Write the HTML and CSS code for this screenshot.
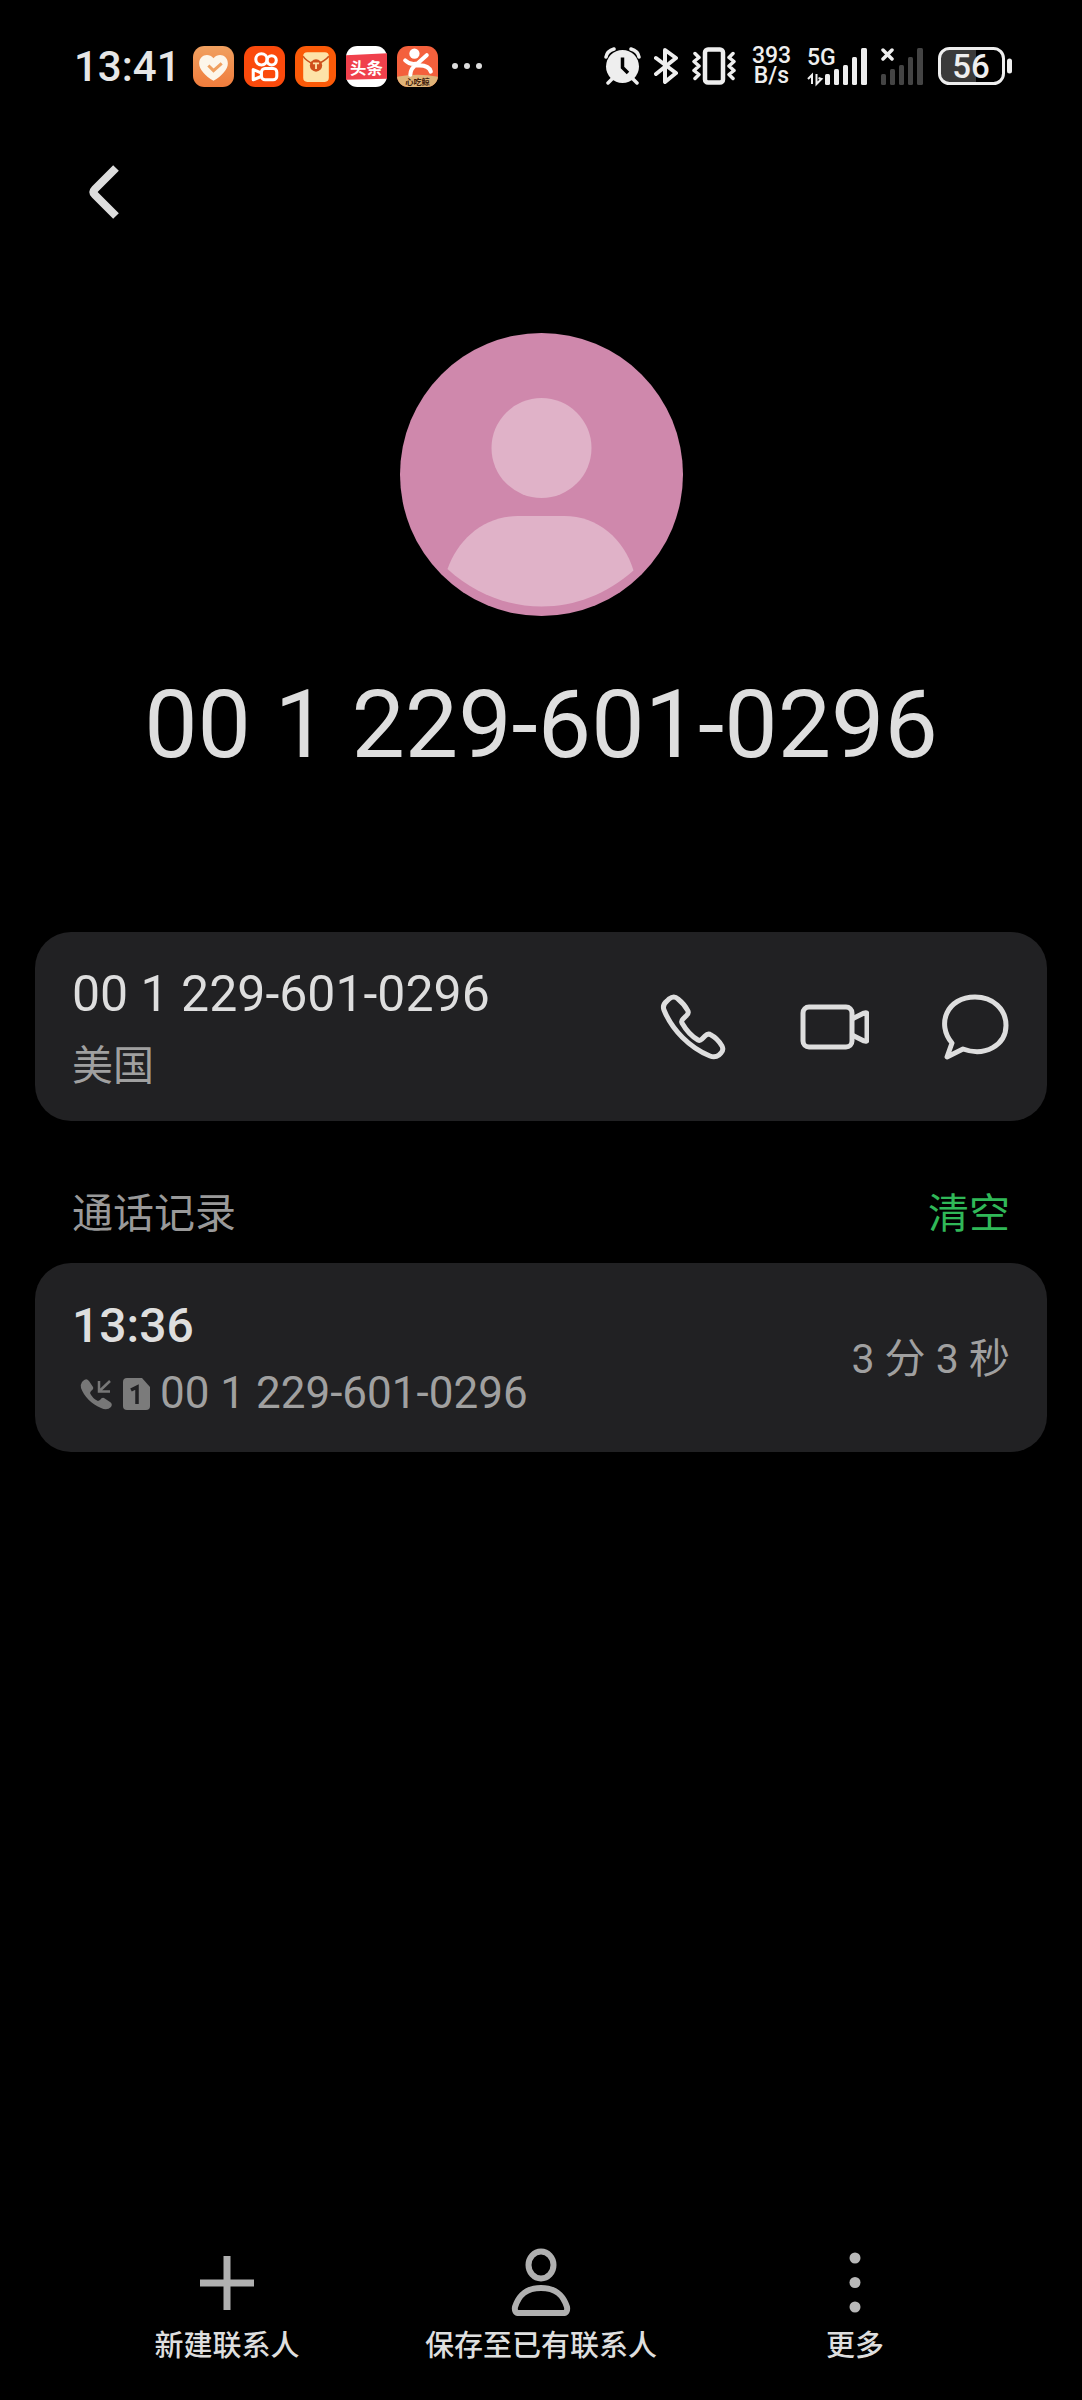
FILE: index.html
```html
<!DOCTYPE html>
<html lang="zh-CN">
<head>
<meta charset="utf-8">
<meta name="viewport" content="width=device-width, initial-scale=1">
<title>联系人详情</title>
<link rel="stylesheet" href="styles.css">
</head>
<body>
<div class="status">
  <time class="clock">13:41</time>
  <div class="apps">
    <svg class="app" viewBox="0 0 40 40" aria-hidden="true">
      <defs><linearGradient id="g1" x1="0" y1="0" x2="0" y2="1"><stop offset="0" stop-color="#f0a060"/><stop offset="1" stop-color="#f07c3c"/></linearGradient></defs>
      <rect width="40" height="40" rx="11" fill="url(#g1)"/>
      <path d="M20 34C12 29 6 23 6 17c0-8 9-11 14-5 5-6 14-3 14 5 0 6-6 12-14 17z" fill="#fdf6ea"/>
      <path d="M15 19l5 5 8-7" fill="none" stroke="#f0a060" stroke-width="3"/>
    </svg>
    <svg class="app" viewBox="0 0 40 40" aria-hidden="true">
      <rect width="40" height="40" rx="11" fill="#fb4a0c"/>
      <g fill="none" stroke="#fff" stroke-width="3" stroke-linejoin="round"><circle cx="17" cy="13" r="5.5"/><circle cx="27" cy="14" r="4.5"/><rect x="17" y="22" width="15" height="11" rx="3.5"/><path d="M16 26l-7-3v10l7-3"/></g>
    </svg>
    <svg class="app" viewBox="0 0 40 40" aria-hidden="true">
      <rect width="40" height="40" rx="11" fill="#fb5a08"/>
      <rect x="8" y="6" width="25" height="29" rx="4" fill="#fde3a8"/>
      <path d="M8 10q2 4 12 9 10-5 13-9" fill="none" stroke="#c8501c" stroke-width="1.5"/>
      <circle cx="20.500" cy="19" r="6" fill="#d0501c"/><path d="M17.500 17h6M20.500 17v5.500" stroke="#fde3a8" stroke-width="1.800"/>
    </svg>
    <svg class="app" viewBox="0 0 40 40" aria-hidden="true">
      <rect width="40" height="40" rx="11" fill="#fff"/>
      <path d="M0 9l40-2v25L0 33z" fill="#f0404c"/>
      <text class="app-name" x="20" y="27" font-size="16" font-weight="700" fill="#fff" text-anchor="middle">头条</text>
    </svg>
    <svg class="app" viewBox="0 0 40 40" aria-hidden="true">
      <defs><clipPath id="c5"><rect width="40" height="40" rx="11"/></clipPath></defs>
      <g clip-path="url(#c5)"><rect width="40" height="40" fill="#f4603c"/><path d="M0 30q20-4 40 0v10H0z" fill="#e0b478"/></g>
      <circle cx="17" cy="7.500" r="5" fill="#fff"/>
      <path d="M8 14q5 5 12 3l9-8M20 17q-7 5-7 11M19 19q12-1 14 6" fill="none" stroke="#fff" stroke-width="4" stroke-linecap="round"/>
      <text class="app-name" x="20" y="38" font-size="8" font-weight="700" fill="#40200c" text-anchor="middle">心吃鲸</text>
    </svg>
  </div>
  <svg class="more-apps" viewBox="0 0 30 8" aria-hidden="true"><g fill="#ddd"><circle cx="3" cy="4" r="3"/><circle cx="15" cy="4" r="3"/><circle cx="27" cy="4" r="3"/></g></svg>
  <div class="system">
    <svg width="37" height="40" viewBox="0 0 37 40" aria-hidden="true">
      <g fill="none" stroke="#eee" stroke-width="3.500" stroke-linecap="round"><path d="M2 11q1-6 8-8M35 11q-1-6-8-8M8 33l-4 4M29 33l4 4"/></g>
      <circle cx="18.500" cy="20.500" r="16.500" fill="#eee"/><path d="M18.500 11.500v10l5.500 5.500" fill="none" stroke="#000" stroke-width="3.500"/>
    </svg>
    <svg width="25" height="40" viewBox="0 0 25 40" aria-hidden="true"><path d="M2 12l20 15-11 9V4l11 8L2 28" fill="none" stroke="#eee" stroke-width="4" stroke-linejoin="round" stroke-linecap="round"/></svg>
    <svg width="44" height="40" viewBox="0 0 44 40" aria-hidden="true">
      <g fill="none" stroke="#eee" stroke-linejoin="round" stroke-linecap="round"><rect x="13" y="3.500" width="18" height="33" rx="3" stroke-width="4.500"/><path d="M3 7.500l4 4-5 4 5 4.500-5 4.500 5 4-4 4M41 7.500l-4 4 5 4-5 4.500 5 4.500-5 4 4 4" stroke-width="3.500"/></g>
    </svg>
    <div class="speed"><span>393</span><span>B/s</span></div>
    <svg class="signal" width="61" height="40" viewBox="0 0 61 40" aria-hidden="true">
      <text class="net" x="0" y="19" font-size="23" font-weight="500" fill="#eee">5G</text>
      <g fill="#eee"><rect x="18" y="28" width="5" height="11" rx="1.500"/><rect x="27" y="23" width="5" height="16" rx="1.500"/><rect x="36" y="19" width="5" height="20" rx="1.500"/><rect x="45" y="11" width="5" height="28" rx="1.500"/><rect x="54" y="2" width="6" height="37" rx="1.500"/></g>
      <path d="M1 33l4-4v9M9.500 28v10l5-5-3-1" fill="none" stroke="#eee" stroke-width="2"/>
    </svg>
    <svg width="44" height="40" viewBox="0 0 44 40" aria-hidden="true">
      <path d="M2 4l9 9M11 4l-9 9" stroke="#eee" stroke-width="3.500" stroke-linecap="round"/>
      <g fill="#444"><rect x="0" y="28" width="5" height="11" rx="1.500"/><rect x="9" y="23" width="5" height="16" rx="1.500"/><rect x="18" y="19" width="5" height="20" rx="1.500"/><rect x="27" y="11" width="5" height="28" rx="1.500"/><rect x="36" y="2" width="6" height="37" rx="1.500"/></g>
    </svg>
    <svg width="74" height="40" viewBox="0 0 74 40" aria-hidden="true">
      <path d="M38 3H13Q3 3 3 12v16q0 9 10 9h25z" fill="#3a3a3a"/><rect x="1.500" y="2.500" width="64" height="35" rx="10" fill="none" stroke="#eee" stroke-width="3"/>
      <path d="M71.500 15v10" stroke="#eee" stroke-width="5" stroke-linecap="round"/>
      <text class="net" x="33" y="32" font-size="33" font-weight="500" fill="#eee" text-anchor="middle">56</text>
    </svg>
  </div>
</div>

<header class="bar">
  <button class="back" aria-label="返回"><svg viewBox="0 0 60 60" aria-hidden="true"><path d="M43 6L22 27q-3 3 0 6l21 21" fill="none" stroke="#ddd" stroke-width="8"/></svg></button>
</header>

<main>
  <section class="profile">
    <svg class="avatar" viewBox="0 0 283 283" role="img" aria-label="头像">
      <circle cx="141.500" cy="141.500" r="141.500" fill="#cf88ac"/>
      <circle cx="141.500" cy="115" r="50" fill="#e0b2c8"/>
      <path d="M47.500 236C58 206 84 183 118 183h46c34 0 60 23 69.500 54.500C207 261 175 273.500 141.500 273.500S75 261 47.500 236z" fill="#e0b2c8"/>
    </svg>
    <h1 class="title">00 1 229-601-0296</h1>
  </section>

  <section class="card">
    <div class="info">
      <div class="primary">00 1 229-601-0296</div>
      <div class="region">美国</div>
    </div>
    <div class="actions">
      <button class="action" aria-label="拨打电话"><svg viewBox="0 0 70 70" aria-hidden="true"><path d="M8 10l2-2q5-4 9 0c5 4 8 8 10 12q1 3-2 5l-3 3q-2 2-1 4c4 7 9 13 16 17q2 1 4-1l3-3q3-3 6-1c4 2 8 6 11 11q2 4-1 7l-2 2q-4 3-9 1C31 57 13 39 5 19q-2-5 3-9z" transform="translate(1 -1)"/></svg></button>
      <button class="action" aria-label="视频通话"><svg viewBox="0 0 70 70" aria-hidden="true"><rect x="4" y="15" width="49" height="40" rx="6"/><path d="M53 27l12-6q3-1 3 1v26q0 2-3 1l-12-6"/></svg></button>
      <button class="action" aria-label="发送信息"><svg viewBox="0 0 70 70" aria-hidden="true"><path d="M12 51C-4 32 7 5 35 5c18 0 31 12 31 28.500C66 53 45 65 23 57L7 65z"/></svg></button>
    </div>
  </section>

  <div class="section-head">
    <h2 class="section-title">通话记录</h2>
    <button class="clear">清空</button>
  </div>

  <section class="card">
    <div class="info">
      <div class="primary time">13:36</div>
      <div class="record">
        <svg width="34" height="34" viewBox="0 0 34 34" aria-hidden="true"><path d="M3 5q4-5 7-1l4 6q1 2-2 4l-1 2q2 5 8 8l2-1q2-3 4-2l6 4q3 2 1 5-4 4-10 1C12 27 5 19 2 11q-1-3 1-6z" fill="#777"/><path d="M31 4L20.500 14M20 4v10.500h11" fill="none" stroke="#777" stroke-width="2.500"/></svg>
        <svg width="27" height="34" viewBox="0 0 27 34" aria-hidden="true"><path d="M4 1h15l8 9v19q0 4-4 4H4q-4 0-4-4V5q0-4 4-4z" fill="#7b7b7b"/><path d="M8 13l6-3v17" fill="none" stroke="#212123" stroke-width="3.500"/></svg>
        <span class="number">00 1 229-601-0296</span>
      </div>
    </div>
    <div class="duration">3 分 3 秒</div>
  </section>
</main>

<nav class="tools">
  <button class="tool"><svg viewBox="0 0 70 70" aria-hidden="true"><path d="M35 9v54M8 36h54" stroke="#b0b0b0" stroke-width="7"/></svg><span>新建联系人</span></button>
  <button class="tool"><svg viewBox="0 0 70 70" aria-hidden="true"><g fill="none" stroke="#b0b0b0" stroke-width="6"><ellipse cx="35" cy="18" rx="12.500" ry="13.500"/><path d="M35 41c15 0 22 7 26 19q1 6-4 6H13q-5 0-4-6c4-12 11-19 26-19z"/></g></svg><span>保存至已有联系人</span></button>
  <button class="tool"><svg viewBox="0 0 70 70" aria-hidden="true"><g fill="#b8b8b8"><circle cx="35" cy="11" r="5.500"/><circle cx="35" cy="35.500" r="5.500"/><circle cx="35" cy="60" r="5.500"/></g></svg><span>更多</span></button>
</nav>
</body>
</html>
```
FILE: styles.css
```css
* { box-sizing: border-box; }
body {
  margin: 0;
  min-height: 100vh;
  display: flex;
  flex-direction: column;
  background: #000;
  color: #dedede;
  font-family: Roboto, "Noto Sans CJK SC", sans-serif;
}
svg { display: block; flex: none; }
button {
  padding: 0;
  border: 0;
  background: none;
  color: inherit;
  font: inherit;
}
h1, h2 { margin: 0; font-weight: 400; }

.status {
  display: flex;
  align-items: center;
  height: 132px;
  padding: 0 70px;
}
.clock { width: 123px; padding-left: 4px; font-size: 42px; font-weight: 500; color: #e6e6e6; }
.apps { display: flex; gap: 10px; }
.app { width: 41px; height: 41px; }
.app-name { font-family: "Noto Sans CJK SC", sans-serif; }
.net { font-family: Roboto, sans-serif; }
.signal { overflow: visible; }
.more-apps { width: 30px; margin-left: 14px; }
.system { display: flex; gap: 13px; margin-left: auto; color: #eee; }
.speed {
  display: flex;
  flex-direction: column;
  align-items: center;
  justify-content: center;
  width: 41px;
  margin: 0 2px;
  font-size: 23px;
  font-weight: 500;
  line-height: 20px;
}

.bar { display: flex; padding: 30px 73px; }
.back svg { width: 60px; height: 60px; }

.profile {
  display: flex;
  flex-direction: column;
  align-items: center;
  padding-top: 81px;
}
.avatar { width: 283px; height: 283px; }
.title { margin-top: 48px; font-size: 95px; line-height: 122px; text-align: center; }

.card {
  display: flex;
  align-items: center;
  justify-content: space-between;
  margin: 0 35px;
  padding: 27px 37px;
  border-radius: 36px;
  background: #212123;
}
.profile + .card { margin-top: 146px; }
.primary { font-size: 50px; line-height: 70px; }
.time { font-size: 48px; line-height: 72px; font-weight: 500; }
.region { margin-top: 10px; font-size: 41px; line-height: 55px; color: #a0a0a0; }
.actions { display: flex; gap: 71px; }
.action svg {
  width: 70px;
  height: 70px;
  fill: none;
  stroke: #dedede;
  stroke-width: 5;
  stroke-linejoin: round;
}

.section-head {
  display: flex;
  justify-content: space-between;
  margin: 63px 72px 19px;
  font-size: 41px;
  line-height: 60px;
}
.section-title { font-size: 41px; color: #999; }
.clear { color: #30b858; }

.record {
  display: flex;
  align-items: center;
  gap: 10px;
  padding-left: 7px;
  color: #a0a0a0;
}
.number { font-size: 44px; line-height: 63px; }
.duration { padding-bottom: 6px; font-size: 41px; color: #a0a0a0; }

.tools {
  display: grid;
  grid-template-columns: repeat(3, 1fr);
  margin-top: auto;
  padding: 30px 70px 34px;
}
.tool { display: flex; flex-direction: column; align-items: center; gap: 9px; }
.tool svg { width: 70px; height: 70px; }
.tool span { font-size: 29px; line-height: 40px; font-weight: 500; }
```
